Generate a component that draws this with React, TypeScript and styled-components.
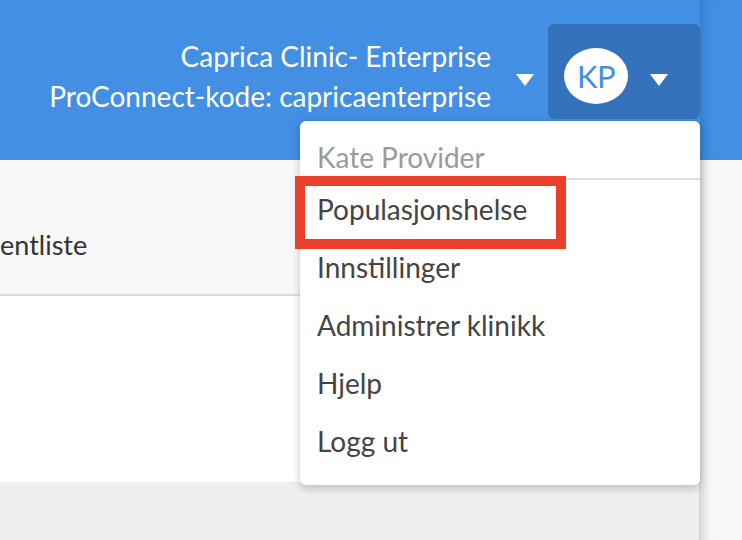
import React from "react";
import styled, { createGlobalStyle } from "styled-components";

const Global = createGlobalStyle`
  html, body { margin: 0; padding: 0; }
  body { font-family: Lato, "Open Sans", sans-serif; background: #f0f0f0; }
  * { box-sizing: border-box; }
`;

const BLUE = "#428fe4";

const Page = styled.div`
  display: grid;
  grid-template-columns: 700px 42px;
  width: 742px;
  height: 540px;
  overflow: hidden;
`;

const Main = styled.div`
  display: flex;
  flex-direction: column;
  min-width: 0;
`;

const Header = styled.header`
  position: relative;
  z-index: 2;
  height: 160px;
  flex: none;
  background: ${BLUE};
  display: flex;
  justify-content: flex-end;
  align-items: flex-start;
  padding-top: 24px;
`;

const ClinicInfo = styled.div`
  margin-top: 12px;
  text-align: right;
  color: #fff;
  font-size: 28px;
  line-height: 40px;
  white-space: nowrap;
`;

const Caret = styled.span<{ $gapLeft: number; $top: number; $gapRight: number }>`
  flex: none;
  width: 0;
  height: 0;
  border-left: 9.5px solid transparent;
  border-right: 9.5px solid transparent;
  border-top: 12px solid #fff;
  margin: ${(p) => p.$top}px ${(p) => p.$gapRight}px 0 ${(p) => p.$gapLeft}px;
`;

const UserMenu = styled.div`
  position: relative;
  flex: none;
`;

const UserButton = styled.div`
  width: 152px;
  height: 95px;
  background: #3473bb;
  border-radius: 6px;
  display: flex;
  align-items: flex-start;
  padding: 24px 0 0 16px;
`;

const Avatar = styled.div`
  width: 64px;
  height: 56px;
  border-radius: 50%;
  background: #fff;
  color: ${BLUE};
  font-size: 31px;
  display: flex;
  align-items: center;
  justify-content: center;
  letter-spacing: -0.5px;
`;

const Dropdown = styled.div`
  position: absolute;
  top: 97px;
  right: 0;
  width: 400px;
  background: #fff;
  border-radius: 6px;
  box-shadow: 0 3px 10px rgba(0, 0, 0, 0.22);
  padding-bottom: 15px;
`;

const DropHeader = styled.div`
  padding: 20px 17px 5px;
  font-size: 28px;
  line-height: 32px;
  color: #9a9a9a;
  border-bottom: 2px solid #dedede;
`;

const Item = styled.div`
  position: relative;
  height: 58px;
  padding-left: 17px;
  font-size: 28px;
  line-height: 58px;
  color: #444;
`;

const Highlight = styled.span`
  position: absolute;
  left: -5px;
  top: -4px;
  width: 271px;
  height: 73px;
  border: 10px solid #e8402a;
  pointer-events: none;
`;

const TabBar = styled.div`
  height: 136px;
  flex: none;
  background: #f8f8f8;
  border-bottom: 2px solid #dcdcdc;
  display: flex;
  align-items: center;
  padding-top: 34px;
`;

const Tab = styled.div`
  font-size: 27px;
  color: #333;
`;

const Content = styled.div`
  height: 186px;
  flex: none;
  background: #fff;
`;

const Footer = styled.div`
  flex: 1;
  background: #efefef;
  border-right: 1px solid #d6d6d6;
`;

const Rail = styled.div`
  position: relative;
  z-index: 1;
  display: flex;
  flex-direction: column;
  background: #f8f8f8;
  box-shadow: inset 10px 0 10px -6px rgba(0, 0, 0, 0.14);
`;

const RailTop = styled.div`
  height: 160px;
  background: ${BLUE};
  box-shadow: inset 10px 0 10px -6px rgba(0, 0, 0, 0.14);
`;

const items = ["Populasjonshelse", "Innstillinger", "Administrer klinikk", "Hjelp", "Logg ut"];

export default function App() {
  return (
    <>
      <Global />
      <Page>
        <Main>
          <Header>
            <ClinicInfo>
              <div>Caprica Clinic- Enterprise</div>
              <div>ProConnect-kode: capricaenterprise</div>
            </ClinicInfo>
            <Caret $gapLeft={25} $top={50} $gapRight={14} />
            <UserMenu>
              <UserButton>
                <Avatar>KP</Avatar>
                <Caret $gapLeft={22} $top={26} $gapRight={0} />
              </UserButton>
              <Dropdown>
                <DropHeader>Kate Provider</DropHeader>
                {items.map((t, i) => (
                  <Item key={t}>
                    {t}
                    {i === 0 && <Highlight />}
                  </Item>
                ))}
              </Dropdown>
            </UserMenu>
          </Header>
          <TabBar>
            <Tab>entliste</Tab>
          </TabBar>
          <Content />
          <Footer />
        </Main>
        <Rail>
          <RailTop />
        </Rail>
      </Page>
    </>
  );
}
